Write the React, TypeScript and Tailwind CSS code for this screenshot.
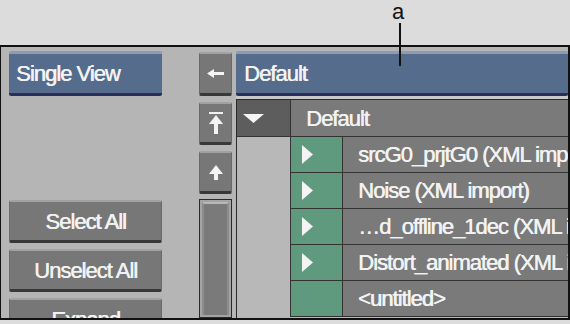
import React from "react";

const font = "font-['Liberation_Sans',Arial,sans-serif]";

const grayBtn =
  "shrink-0 bg-[#777777] border-t-2 border-t-[#a2a2a2] border-b-[3px] border-b-[#383838] border-x border-x-[#6a6a6a] rounded-[2px]";
const blueBar =
  "shrink-0 bg-[#566c8c] border-t-[3px] border-t-[#8e9bb2] border-b-[3px] border-b-[#2b2d5c] rounded-[2px]";

const LeftArrow = () => (
  <svg width="17" height="9" viewBox="0 0 17 9">
    <polygon points="0,4.5 7,0 7,3 17,3 17,6 7,6 7,9" fill="#f4f4f4" />
  </svg>
);

const TopArrow = () => (
  <svg width="14" height="23" viewBox="0 0 14 23">
    <rect x="0" y="0" width="14" height="2" fill="#f4f4f4" />
    <polygon points="7,3 0,12 14,12" fill="#f4f4f4" />
    <rect x="5" y="12" width="4" height="10" fill="#f4f4f4" />
  </svg>
);

const UpArrow = () => (
  <svg width="14" height="15" viewBox="0 0 14 15">
    <polygon points="7,0 0,9 14,9" fill="#f4f4f4" />
    <rect x="5" y="9" width="4" height="6" fill="#f4f4f4" />
  </svg>
);

const rows = [
  { name: "srcG0_prjtG0 (XML import)", open: true },
  { name: "Noise (XML import)", open: true },
  { name: "\u2026d_offline_1dec (XML import)", open: true },
  { name: "Distort_animated (XML import)", open: true },
  { name: "<untitled>", open: false },
];

const App: React.FC = () => {
  return (
    <div className={`relative w-[570px] h-[324px] bg-[#dcdcdc] pt-[45px] overflow-hidden ${font}`}>
      {/* annotation */}
      <div className="absolute left-[392px] top-[1px] text-[22px] leading-[22px] text-[#111]">a</div>
      <div className="absolute left-[399px] top-[23px] w-[2px] h-[43px] bg-[#111] z-10" />

      <div className="w-[570px] h-[275px] bg-[#b5b5b5] border-t-2 border-b-2 border-l border-r-2 border-[#111] overflow-hidden flex text-[22px] tracking-[-1px] text-[#f2f2f2] [text-shadow:0.6px_0_0_#f2f2f2]">
        {/* Left column */}
        <div className="ml-2 w-[153px] shrink-0 pt-[4px] flex flex-col">
          <div className={`h-[45px] ${blueBar} flex items-center pl-[7px]`}>Single View</div>
          <div className={`mt-[104px] h-[43px] ${grayBtn} flex items-center justify-center`}>Select All</div>
          <div className={`mt-[6px] h-[43px] ${grayBtn} flex items-center justify-center`}>Unselect All</div>
          <div className={`mt-[6px] h-[43px] ${grayBtn} flex items-center justify-center`}>Expand</div>
        </div>

        {/* Middle column */}
        <div className="ml-[37px] w-[33px] shrink-0 pt-[5px] flex flex-col">
          <div className={`h-[44px] ${grayBtn} flex items-center justify-center`}>
            <LeftArrow />
          </div>
          <div className={`mt-[6px] h-[43px] ${grayBtn} flex items-center justify-center`}>
            <TopArrow />
          </div>
          <div className={`mt-[6px] h-[43px] ${grayBtn} flex items-center justify-center`}>
            <UpArrow />
          </div>
          <div className="mt-[5px] flex-1 border border-[#2a2a2a] p-[2px] bg-[#a4a4a4]">
            <div className="h-full bg-[#7a7a7a] border-x-2 border-x-[#8c8c8c] border-t-2 border-t-[#b8b8b8]" />
          </div>
        </div>

        {/* Right column */}
        <div className="ml-[4px] flex-1 pt-[4px] flex flex-col min-w-0">
          <div className={`h-[45px] ${blueBar} flex items-center pl-[8px]`}>Default</div>
          <div className="h-[3px] shrink-0 bg-[#c8c8c8]" />
          <div className="flex-1 border-t border-l border-[#2a2a2a] flex flex-col">
            {/* header */}
            <div className="flex shrink-0 h-[37px] border-b border-[#333]">
              <div className="w-[54px] bg-[#5d5d5d] border-r border-[#333] flex items-center pl-[6px]">
                <svg width="21" height="9" viewBox="0 0 21 9">
                  <polygon points="0,0 21,0 10.5,9" fill="#f4f4f4" />
                </svg>
              </div>
              <div className="flex-1 bg-[#7a7a7a] flex items-center pl-[15px]">Default</div>
            </div>
            {/* body */}
            {rows.map((r) => (
              <div key={r.name} className="flex shrink-0 h-[36px]">
                <div className="w-[54px] bg-[#b8b8b8] border-r border-[#333]" />
                <div className="w-[52px] bg-[#5f9a7e] border-r border-b border-[#333] flex items-center pl-[11px]">
                  {r.open && (
                    <svg width="11" height="19" viewBox="0 0 11 19">
                      <polygon points="0,0 11,9.5 0,19" fill="#f4f4f4" />
                    </svg>
                  )}
                </div>
                <div className="flex-1 bg-[#7a7a7a] border-b border-[#333] flex items-center pl-[15px] whitespace-nowrap overflow-hidden">
                  {r.name}
                </div>
              </div>
            ))}
          </div>
        </div>
      </div>
    </div>
  );
};

export default App;
